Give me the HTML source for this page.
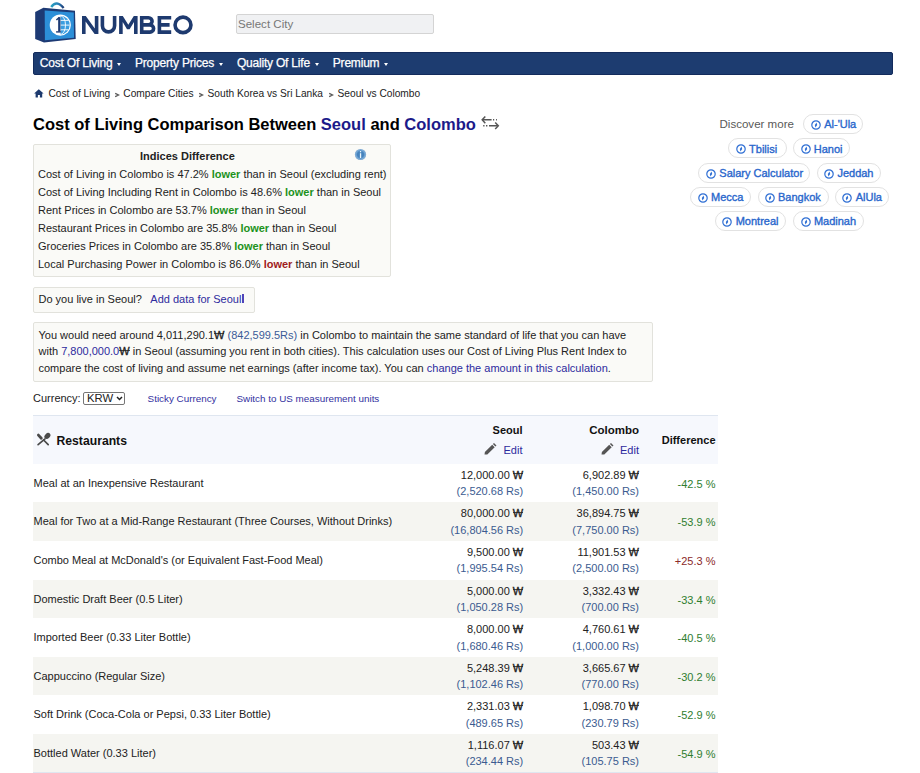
<!DOCTYPE html>
<html><head><meta charset="utf-8">
<style>
*{box-sizing:border-box;margin:0;padding:0}
html,body{width:920px;height:773px;overflow:hidden;background:#fff}
body{font-family:"Liberation Sans",sans-serif;color:#222;font-size:11px;position:relative}
.a{position:absolute;white-space:nowrap}
.t{line-height:13px}
#search{left:236px;top:14.3px;width:198px;height:20.2px;border:1.5px solid #d4d4d4;background:#f0f1f3;border-radius:2px}
#nav{left:33px;top:52px;width:860px;height:23px;background:#1d3c70;border:1px solid #132b5c;border-radius:2px}
.nv{color:#fff;font-size:12px;line-height:13px;letter-spacing:-0.2px;-webkit-text-stroke:0.25px #fff}
.caret{position:absolute;width:0;height:0;border-left:2.7px solid transparent;border-right:2.7px solid transparent;border-top:3.5px solid #fff}
.bc{font-size:10.2px;line-height:12px;color:#222}
.bsep{position:absolute;width:4px;height:4px;border-right:1.2px solid #444;border-bottom:1.2px solid #444;transform:rotate(-45deg)}
.title{font-size:16.5px;font-weight:bold;color:#000;line-height:19px}
.lk{color:#1c1a8a}
.box{position:absolute;border:1px solid #e2e2dc;background:#fafaf7;border-radius:2px}
.lo{color:#1c921c;font-weight:bold}
.hi{color:#a01c1c;font-weight:bold}
.link{color:#2d2a9e}
.blu{color:#3a5a98}
.sm{font-size:9.85px;color:#3230a0;line-height:12px}
.pill{position:absolute;height:20px;border:1.2px solid #e2e2e2;border-radius:10px;background:#fff}
.pt{position:absolute;top:2px;font-size:11px;line-height:13px;color:#2866cc;-webkit-text-stroke:0.35px #2866cc}
.pi{position:absolute;top:4.5px;width:9px;height:9px;border:1.2px solid #2f6fd4;border-radius:50%}
.pi:after{content:"";position:absolute;left:1.9px;top:1.9px;width:2.8px;height:2.8px;background:#2f6fd4;transform:rotate(45deg) scale(0.8,1.3)}
.row{position:absolute;left:32.5px;width:685px;height:38.6px}
.sh{background:#f5f5f1}
.it{position:absolute;left:1px;top:13px;line-height:13px;font-size:11px;color:#222}
.v1{position:absolute;top:5px;line-height:13px;text-align:right;color:#222}
.v2{position:absolute;top:21.6px;line-height:13px;text-align:right;color:#3b5b90}
.df{position:absolute;right:2px;top:14.2px;line-height:13px;text-align:right}
.w{font-style:normal;position:relative;display:inline-block;-webkit-text-stroke:0.35px currentColor}.w:after{content:"";position:absolute;left:0;right:0;top:4.6px;height:0.9px;background:currentColor;opacity:.8}.g{color:#2f7d2f}.r{color:#8b2a2a}
</style></head><body>
<svg width="0" height="0" style="position:absolute"><defs><symbol id="pin" viewBox="0 0 10 10"><circle cx="5" cy="5" r="4.2" fill="none" stroke="#2f6fd4" stroke-width="1.2"/><path d="M5.6 2.4 L6.2 5 L4.4 7.6 L3.8 5 Z" fill="#2f6fd4"/></symbol></defs></svg>
<!-- logo -->
<svg class="a" style="left:0;top:0" width="200" height="48" viewBox="0 0 200 48">
<defs><linearGradient id="hg" x1="0" x2="1"><stop offset="0" stop-color="#2aa0c0"/><stop offset="0.6" stop-color="#2a7fb8"/><stop offset="1" stop-color="#1d3a74"/></linearGradient><clipPath id="gc"><circle cx="60.3" cy="25.1" r="9.4"/></clipPath></defs>
<path d="M51.2 7 Q56.5 -0.5 63.6 8" stroke="url(#hg)" stroke-width="2.4" fill="none"/>
<path d="M35.2 12.1 L43.4 7.8 L75 10.8 L75.7 39.1 L44 42.4 L35.2 39.1 Z" fill="#1d3a74"/>
<path d="M44.7 10.6 L73.8 12.4 L74 37.8 L44.9 40.2 Z" fill="#2c8fd8"/>
<circle cx="60.3" cy="25.1" r="10.6" fill="#fff"/>
<g clip-path="url(#gc)"><rect x="60.6" y="15" width="11" height="21" fill="#3a9de0"/><path d="M60 20.4 H71 M60 25.1 H71 M60 29.8 H71" stroke="#fff" stroke-width="0.9"/><ellipse cx="60.3" cy="25.1" rx="5.2" ry="9.4" fill="none" stroke="#fff" stroke-width="0.9"/></g>
<path d="M59.3 17.3 V31.6" stroke="#1d3a74" stroke-width="2.3"/><path d="M56.4 20 L59.5 17.3" stroke="#1d3a74" stroke-width="1.5"/><path d="M56.1 31.9 H60.8" stroke="#1d3a74" stroke-width="1.4"/>
<g fill="#1e3a6f">
<path d="M82 34 V16 H85.8 L94.8 28.5 V16 H98.4 V34 H94.6 L85.6 21.5 V34 Z"/>
<path d="M119.1 34 V16 H122.8 L128.3 24.8 L133.8 16 H137.6 V34 H134 V22 L129.6 29.2 H127 L122.7 22 V34 Z"/>
</g>
<g fill="none" stroke="#1e3a6f" stroke-width="3.6">
<path d="M102.4 16 V25.8 A6.1 6.1 0 0 0 114.6 25.8 V16"/>
<path d="M141.7 15.9 V33.9 M141.7 17.7 H148.5 A3.6 3.6 0 0 1 148.5 24.9 H141.7 M141.7 24.9 H150 A3.6 3.6 0 0 1 150 32.1 H141.7"/>
<path d="M159.4 15.9 V33.9 M159.4 17.7 H171.2 M159.4 24.9 H169.6 M159.4 32.1 H171.2"/>
<ellipse cx="183" cy="24.9" rx="7.95" ry="7.75"/>
</g>
</svg>
<div id="search" class="a"><span class="a t" style="left:1px;top:2.5px;font-size:11.55px;color:#777">Select City</span></div>
<div id="nav" class="a"></div>
<span class="a nv" style="left:39.8px;top:56.6px">Cost Of Living</span><i class="caret" style="left:117px;top:62.9px"></i>
<span class="a nv" style="left:135px;top:56.6px">Property Prices</span><i class="caret" style="left:218.5px;top:62.9px"></i>
<span class="a nv" style="left:236.9px;top:56.6px">Quality Of Life</span><i class="caret" style="left:315px;top:62.9px"></i>
<span class="a nv" style="left:332.8px;top:56.6px">Premium</span><i class="caret" style="left:383.6px;top:62.9px"></i>
<!-- breadcrumb -->
<svg class="a" style="left:34px;top:89px" width="10" height="9" viewBox="0 0 10 9"><path d="M4.8 0.3 L9.6 4.6 H8.2 V8.6 H5.9 V6 H3.9 V8.6 H1.6 V4.6 H0.1 Z" fill="#1d3a6e"/></svg>
<span class="a bc" style="left:48.5px;top:87.5px">Cost of Living</span><svg class="a" style="left:114px;top:92px" width="6" height="6" viewBox="0 0 6 6"><path d="M1.2 1.4 L4.6 3 L1.2 4.6" stroke="#555" stroke-width="1.2" fill="none"/></svg>
<span class="a bc" style="left:123.3px;top:87.5px">Compare Cities</span><svg class="a" style="left:198.3px;top:92px" width="6" height="6" viewBox="0 0 6 6"><path d="M1.2 1.4 L4.6 3 L1.2 4.6" stroke="#555" stroke-width="1.2" fill="none"/></svg>
<span class="a bc" style="left:207.5px;top:87.5px">South Korea vs Sri Lanka</span><svg class="a" style="left:328px;top:92px" width="6" height="6" viewBox="0 0 6 6"><path d="M1.2 1.4 L4.6 3 L1.2 4.6" stroke="#555" stroke-width="1.2" fill="none"/></svg>
<span class="a bc" style="left:337.5px;top:87.5px">Seoul vs Colombo</span>
<!-- title -->
<span class="a title" style="left:33px;top:115px">Cost of Living Comparison Between <span class="lk">Seoul</span> and <span class="lk">Colombo</span></span>
<svg class="a" style="left:478px;top:112px" width="24" height="20" viewBox="0 0 24 20"><g stroke="#555" stroke-width="1.5" fill="none"><path d="M7.3 4.4 L4.2 7.8 L7.3 11.2"/><path d="M4.5 7.8 H13.6 M15 7.8 H16.2 M18 7.8 H18.9"/><path d="M17.2 10.4 L20.3 13.8 L17.2 17"/><path d="M11 13.8 H19.8 M8 13.8 H9.4 M5.2 13.8 H6.5"/></g></svg>
<!-- indices box -->
<div class="box" style="left:33px;top:144.2px;width:358px;height:133.2px"></div>
<span class="a t" style="left:140px;top:150px;font-weight:bold">Indices Difference</span>
<svg class="a" style="left:354.1px;top:147.7px" width="13" height="13" viewBox="0 0 13 13"><defs><radialGradient id="ig" cx="50%" cy="50%" r="50%"><stop offset="0.55" stop-color="#4683bd"/><stop offset="0.85" stop-color="#7fb0dc"/><stop offset="1" stop-color="#6d98c4"/></radialGradient></defs><circle cx="6.5" cy="6.5" r="5.6" fill="url(#ig)"/><rect x="5.9" y="5.2" width="1.3" height="4.8" fill="#eaf6fb"/><rect x="5.9" y="3" width="1.3" height="1.3" fill="#eaf6fb"/></svg>
<span class="a t" style="left:38px;top:168px">Cost of Living in Colombo is 47.2% <span class="lo">lower</span> than in Seoul (excluding rent)</span>
<span class="a t" style="left:38px;top:186px">Cost of Living Including Rent in Colombo is 48.6% <span class="lo">lower</span> than in Seoul</span>
<span class="a t" style="left:38px;top:204px">Rent Prices in Colombo are 53.7% <span class="lo">lower</span> than in Seoul</span>
<span class="a t" style="left:38px;top:222px">Restaurant Prices in Colombo are 35.8% <span class="lo">lower</span> than in Seoul</span>
<span class="a t" style="left:38px;top:240px">Groceries Prices in Colombo are 35.8% <span class="lo">lower</span> than in Seoul</span>
<span class="a t" style="left:38px;top:258px">Local Purchasing Power in Colombo is 86.0% <span class="hi">lower</span> than in Seoul</span>
<!-- live box -->
<div class="box" style="left:33px;top:286.5px;width:222px;height:26px"></div>
<span class="a t" style="left:38.5px;top:292.6px">Do you live in Seoul?</span>
<span class="a t link" style="left:150.3px;top:292.6px">Add data for Seoul</span><div class="a" style="left:242.2px;top:294px;width:1.8px;height:8.9px;background:#5043b8"></div>
<!-- calc box -->
<div class="box" style="left:33px;top:321.5px;width:620px;height:60.3px"></div>
<span class="a t" style="left:38.5px;top:328.8px">You would need around 4,011,290.1<i class="w">W</i> <span class="blu">(842,599.5Rs)</span> in Colombo to maintain the same standard of life that you can have</span>
<span class="a t" style="left:38.5px;top:345px">with <span class="link">7,800,000.0</span><i class="w">W</i> in Seoul (assuming you rent in both cities). This calculation uses our Cost of Living Plus Rent Index to</span>
<span class="a t" style="left:38.5px;top:361.7px">compare the cost of living and assume net earnings (after income tax). You can <span class="link">change the amount in this calculation</span>.</span>
<!-- currency -->
<span class="a t" style="left:33px;top:391.5px">Currency:</span>
<div class="a" style="left:83.4px;top:391.5px;width:41.5px;height:13.5px;border:1px solid #767676;border-radius:2px;background:#fff"></div>
<span class="a t" style="left:87px;top:391.8px;font-size:11.3px">KRW</span>
<svg class="a" style="left:115.5px;top:395.5px" width="7" height="5" viewBox="0 0 7 5"><path d="M1 1 L3.5 3.5 L6 1" stroke="#222" stroke-width="1.5" fill="none"/></svg>
<span class="a sm" style="left:147.6px;top:392.5px">Sticky Currency</span>
<span class="a sm" style="left:236.5px;top:392.5px">Switch to US measurement units</span>
<!-- discover -->
<span class="a t" style="left:719.5px;top:118px;font-size:11.55px;color:#595959">Discover more</span>
<div class="pill" style="left:803.4px;top:113.6px;width:59.2px"></div><svg class="a" style="left:811.0px;top:119.5px" width="10" height="10"><use href="#pin"/></svg><span class="a pt" style="left:824.2px;top:118px">Al-'Ula</span>
<div class="pill" style="left:728.4px;top:138.1px;width:58.2px"></div><svg class="a" style="left:736.0px;top:144.0px" width="10" height="10"><use href="#pin"/></svg><span class="a pt" style="left:749.1px;top:142.5px">Tbilisi</span>
<div class="pill" style="left:792.9px;top:138.1px;width:56.7px"></div><svg class="a" style="left:800.5px;top:144.0px" width="10" height="10"><use href="#pin"/></svg><span class="a pt" style="left:813.8px;top:142.5px">Hanoi</span>
<div class="pill" style="left:698.1px;top:162.6px;width:112.2px"></div><svg class="a" style="left:705.8px;top:168.5px" width="10" height="10"><use href="#pin"/></svg><span class="a pt" style="left:719.3px;top:167px">Salary Calculator</span>
<div class="pill" style="left:816.6px;top:162.6px;width:64.2px"></div><svg class="a" style="left:824.3px;top:168.5px" width="10" height="10"><use href="#pin"/></svg><span class="a pt" style="left:837.4px;top:167px">Jeddah</span>
<div class="pill" style="left:690.4px;top:186.8px;width:60.6px"></div><svg class="a" style="left:697.5px;top:192.7px" width="10" height="10"><use href="#pin"/></svg><span class="a pt" style="left:711px;top:191.2px">Mecca</span>
<div class="pill" style="left:757.9px;top:186.8px;width:70.7px"></div><svg class="a" style="left:765.2px;top:192.7px" width="10" height="10"><use href="#pin"/></svg><span class="a pt" style="left:778px;top:191.2px">Bangkok</span>
<div class="pill" style="left:835.1px;top:186.8px;width:53.8px"></div><svg class="a" style="left:842.3px;top:192.7px" width="10" height="10"><use href="#pin"/></svg><span class="a pt" style="left:855.7px;top:191.2px">AlUla</span>
<div class="pill" style="left:715.1px;top:210.8px;width:71.2px"></div><svg class="a" style="left:722.1px;top:216.7px" width="10" height="10"><use href="#pin"/></svg><span class="a pt" style="left:735.7px;top:215.2px">Montreal</span>
<div class="pill" style="left:793.3px;top:210.8px;width:71.2px"></div><svg class="a" style="left:800.8px;top:216.7px" width="10" height="10"><use href="#pin"/></svg><span class="a pt" style="left:813.9px;top:215.2px">Madinah</span>
<!-- table -->
<div class="a" style="left:32.5px;top:415px;width:685px;height:48.7px;background:#f6f8fd;border-top:1px solid #dfe6f0"></div>
<svg class="a" style="left:34px;top:430px" width="18" height="18" viewBox="0 0 18 18"><g stroke="#4a4a4a" fill="none" stroke-linecap="round"><path d="M4.4 5.1 L7.3 8.3" stroke-width="2.8"/><path d="M9.6 10 L14.2 14.7" stroke-width="1.7"/><path d="M11 8.9 L4.1 14.6" stroke-width="1.7"/></g><ellipse cx="13.4" cy="5.9" rx="2.5" ry="3.4" transform="rotate(45 13.4 5.9)" fill="#4a4a4a"/></svg>
<span class="a" style="left:56.5px;top:434.5px;font-size:12.2px;font-weight:bold;line-height:13px;color:#111">Restaurants</span>
<span class="a t" style="right:397.5px;top:423.5px;font-weight:bold;color:#111">Seoul</span>
<svg class="a" style="left:484px;top:443px" width="13" height="12" viewBox="0 0 13 12"><path d="M0.5 11.6 L0.9 9.1 L8.2 1.8 L10.7 4.3 L3.3 11.6 Z M8.9 1.1 L10 0 L12.5 2.5 L11.4 3.6 Z" fill="#555"/></svg>
<span class="a t link" style="right:397.5px;top:443.5px">Edit</span>
<span class="a t" style="right:281px;top:423.5px;font-weight:bold;color:#111;font-size:11.5px">Colombo</span>
<svg class="a" style="left:600.5px;top:443px" width="13" height="12" viewBox="0 0 13 12"><path d="M0.5 11.6 L0.9 9.1 L8.2 1.8 L10.7 4.3 L3.3 11.6 Z M8.9 1.1 L10 0 L12.5 2.5 L11.4 3.6 Z" fill="#555"/></svg>
<span class="a t link" style="right:281px;top:443.5px">Edit</span>
<span class="a t" style="right:204.5px;top:434px;font-weight:bold;color:#111">Difference</span>
<div class="row" style="top:463.7px"><span class="it">Meal at an Inexpensive Restaurant</span><span class="v1" style="right:194.3px">12,000.00 <i class="w">W</i></span><span class="v2" style="right:194.3px">(2,520.68 Rs)</span><span class="v1" style="right:78.5px">6,902.89 <i class="w">W</i></span><span class="v2" style="right:78.5px">(1,450.00 Rs)</span><span class="df g">-42.5 %</span></div>
<div class="row sh" style="top:502.3px"><span class="it">Meal for Two at a Mid-Range Restaurant (Three Courses, Without Drinks)</span><span class="v1" style="right:194.3px">80,000.00 <i class="w">W</i></span><span class="v2" style="right:194.3px">(16,804.56 Rs)</span><span class="v1" style="right:78.5px">36,894.75 <i class="w">W</i></span><span class="v2" style="right:78.5px">(7,750.00 Rs)</span><span class="df g">-53.9 %</span></div>
<div class="row" style="top:540.9px"><span class="it">Combo Meal at McDonald's (or Equivalent Fast-Food Meal)</span><span class="v1" style="right:194.3px">9,500.00 <i class="w">W</i></span><span class="v2" style="right:194.3px">(1,995.54 Rs)</span><span class="v1" style="right:78.5px">11,901.53 <i class="w">W</i></span><span class="v2" style="right:78.5px">(2,500.00 Rs)</span><span class="df r">+25.3 %</span></div>
<div class="row sh" style="top:579.5px"><span class="it">Domestic Draft Beer (0.5 Liter)</span><span class="v1" style="right:194.3px">5,000.00 <i class="w">W</i></span><span class="v2" style="right:194.3px">(1,050.28 Rs)</span><span class="v1" style="right:78.5px">3,332.43 <i class="w">W</i></span><span class="v2" style="right:78.5px">(700.00 Rs)</span><span class="df g">-33.4 %</span></div>
<div class="row" style="top:618.1px"><span class="it">Imported Beer (0.33 Liter Bottle)</span><span class="v1" style="right:194.3px">8,000.00 <i class="w">W</i></span><span class="v2" style="right:194.3px">(1,680.46 Rs)</span><span class="v1" style="right:78.5px">4,760.61 <i class="w">W</i></span><span class="v2" style="right:78.5px">(1,000.00 Rs)</span><span class="df g">-40.5 %</span></div>
<div class="row sh" style="top:656.7px"><span class="it">Cappuccino (Regular Size)</span><span class="v1" style="right:194.3px">5,248.39 <i class="w">W</i></span><span class="v2" style="right:194.3px">(1,102.46 Rs)</span><span class="v1" style="right:78.5px">3,665.67 <i class="w">W</i></span><span class="v2" style="right:78.5px">(770.00 Rs)</span><span class="df g">-30.2 %</span></div>
<div class="row" style="top:695.3px"><span class="it">Soft Drink (Coca-Cola or Pepsi, 0.33 Liter Bottle)</span><span class="v1" style="right:194.3px">2,331.03 <i class="w">W</i></span><span class="v2" style="right:194.3px">(489.65 Rs)</span><span class="v1" style="right:78.5px">1,098.70 <i class="w">W</i></span><span class="v2" style="right:78.5px">(230.79 Rs)</span><span class="df g">-52.9 %</span></div>
<div class="row sh" style="top:733.9px"><span class="it">Bottled Water (0.33 Liter)</span><span class="v1" style="right:194.3px">1,116.07 <i class="w">W</i></span><span class="v2" style="right:194.3px">(234.44 Rs)</span><span class="v1" style="right:78.5px">503.43 <i class="w">W</i></span><span class="v2" style="right:78.5px">(105.75 Rs)</span><span class="df g">-54.9 %</span></div>
<div class="a" style="left:32.5px;top:771.5px;width:685px;height:2px;background:#dfe6f0"></div>
</body></html>
